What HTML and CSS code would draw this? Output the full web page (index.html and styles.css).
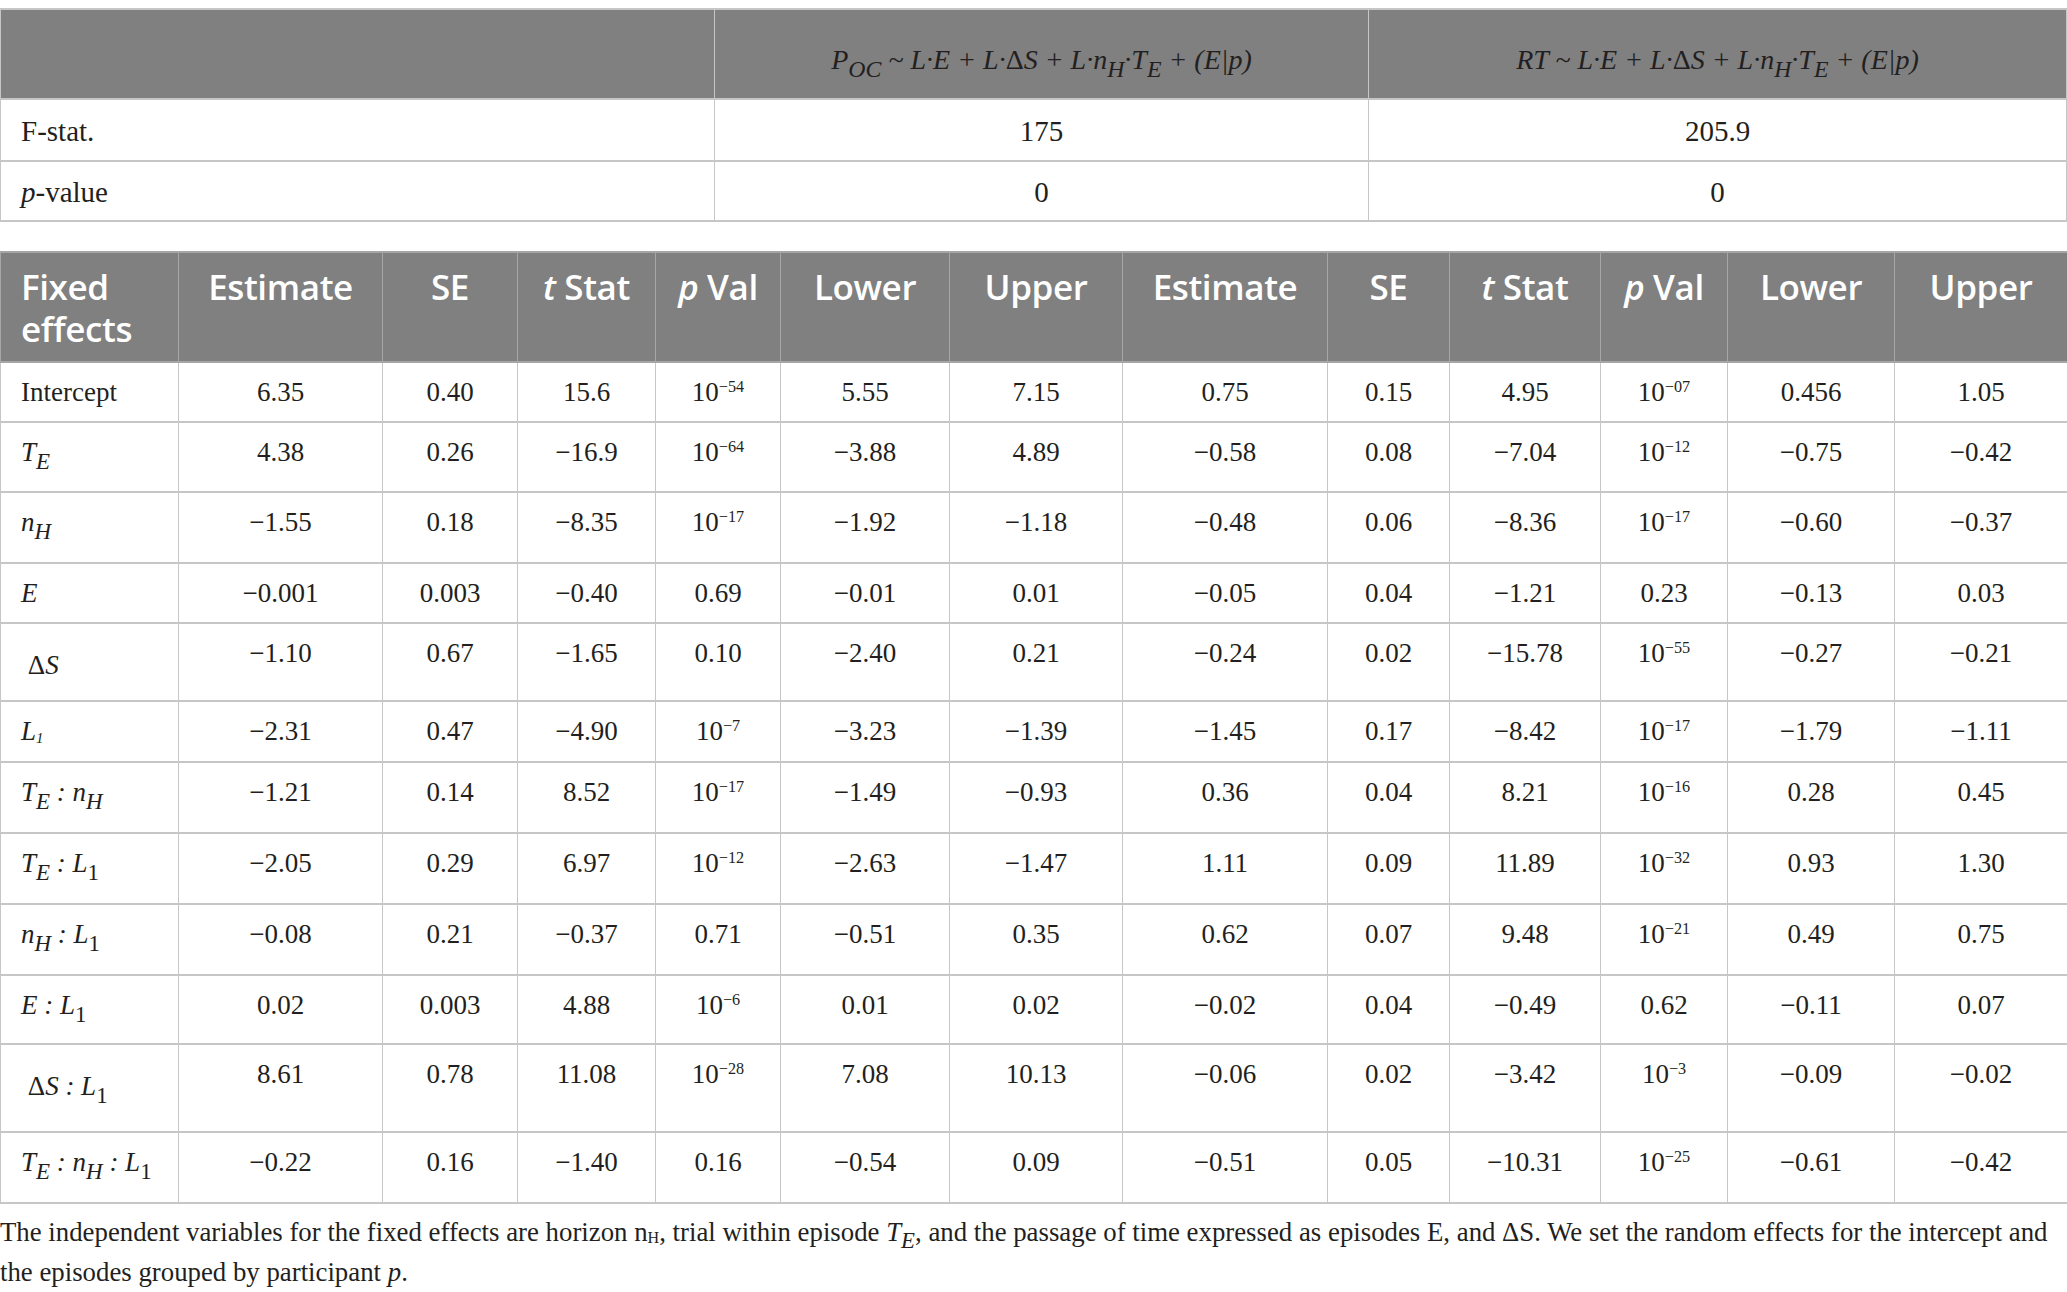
FILE: index.html
```html
<!DOCTYPE html>
<html lang="en">
<head>
  <meta charset="UTF-8" />
  <meta name="viewport" content="width=device-width, initial-scale=1.0" />
  <title>Mixed effects models</title>
  <link rel="stylesheet" href="styles.css">
</head>
<body>

  <!-- model summary -->
  <table class="models">
    <colgroup>
      <col class="c-name">
      <col class="c-model">
      <col class="c-model2">
    </colgroup>
    <thead>
      <tr>
        <th></th>
        <th><span class="math">P<sub>OC</sub> ~ L·E + L·<span class="up">Δ</span>S + L·n<sub>H</sub>·T<sub>E</sub> + (E|p)</span></th>
        <th><span class="math">RT ~ L·E + L·<span class="up">Δ</span>S + L·n<sub>H</sub>·T<sub>E</sub> + (E|p)</span></th>
      </tr>
    </thead>
    <tbody>
      <tr class="f-row">
        <td>F-stat.</td>
        <td>175</td>
        <td>205.9</td>
      </tr>
      <tr class="p-row">
        <td><i>p</i>-value</td>
        <td>0</td>
        <td>0</td>
      </tr>
    </tbody>
  </table>

  <!-- fixed effects -->
  <table class="effects">
    <colgroup>
      <col class="w178">
      <col class="w204">
      <col class="w135">
      <col class="w138">
      <col class="w125">
      <col class="w169">
      <col class="w173">
      <col class="w205">
      <col class="w122">
      <col class="w151">
      <col class="w127">
      <col class="w167">
      <col class="w173">
    </colgroup>
    <thead>
      <tr>
        <th>Fixed effects</th>
        <th>Estimate</th>
        <th>SE</th>
        <th><i>t</i> Stat</th>
        <th><i>p</i> Val</th>
        <th>Lower</th>
        <th>Upper</th>
        <th>Estimate</th>
        <th>SE</th>
        <th><i>t</i> Stat</th>
        <th><i>p</i> Val</th>
        <th>Lower</th>
        <th>Upper</th>
      </tr>
    </thead>
    <tbody>
      <tr class="r60">
        <td>Intercept</td>
        <td>6.35</td><td>0.40</td><td>15.6</td><td>10<sup>−54</sup></td><td>5.55</td><td>7.15</td>
        <td>0.75</td><td>0.15</td><td>4.95</td><td>10<sup>−07</sup></td><td>0.456</td><td>1.05</td>
      </tr>
      <tr class="r70">
        <td><span class="math">T<sub>E</sub></span></td>
        <td>4.38</td><td>0.26</td><td>−16.9</td><td>10<sup>−64</sup></td><td>−3.88</td><td>4.89</td>
        <td>−0.58</td><td>0.08</td><td>−7.04</td><td>10<sup>−12</sup></td><td>−0.75</td><td>−0.42</td>
      </tr>
      <tr class="r71">
        <td><span class="math">n<sub>H</sub></span></td>
        <td>−1.55</td><td>0.18</td><td>−8.35</td><td>10<sup>−17</sup></td><td>−1.92</td><td>−1.18</td>
        <td>−0.48</td><td>0.06</td><td>−8.36</td><td>10<sup>−17</sup></td><td>−0.60</td><td>−0.37</td>
      </tr>
      <tr class="r60">
        <td><span class="math">E</span></td>
        <td>−0.001</td><td>0.003</td><td>−0.40</td><td>0.69</td><td>−0.01</td><td>0.01</td>
        <td>−0.05</td><td>0.04</td><td>−1.21</td><td>0.23</td><td>−0.13</td><td>0.03</td>
      </tr>
      <tr class="r78">
        <td><span class="math low">&nbsp;<span class="up">Δ</span>S</span></td>
        <td>−1.10</td><td>0.67</td><td>−1.65</td><td>0.10</td><td>−2.40</td><td>0.21</td>
        <td>−0.24</td><td>0.02</td><td>−15.78</td><td>10<sup>−55</sup></td><td>−0.27</td><td>−0.21</td>
      </tr>
      <tr class="r61">
        <td><span class="math">L<sub class="small">1</sub></span></td>
        <td>−2.31</td><td>0.47</td><td>−4.90</td><td>10<sup>−7</sup></td><td>−3.23</td><td>−1.39</td>
        <td>−1.45</td><td>0.17</td><td>−8.42</td><td>10<sup>−17</sup></td><td>−1.79</td><td>−1.11</td>
      </tr>
      <tr class="r71">
        <td><span class="math">T<sub>E</sub> : n<sub>H</sub></span></td>
        <td>−1.21</td><td>0.14</td><td>8.52</td><td>10<sup>−17</sup></td><td>−1.49</td><td>−0.93</td>
        <td>0.36</td><td>0.04</td><td>8.21</td><td>10<sup>−16</sup></td><td>0.28</td><td>0.45</td>
      </tr>
      <tr class="r71">
        <td><span class="math">T<sub>E</sub> : L<sub class="up">1</sub></span></td>
        <td>−2.05</td><td>0.29</td><td>6.97</td><td>10<sup>−12</sup></td><td>−2.63</td><td>−1.47</td>
        <td>1.11</td><td>0.09</td><td>11.89</td><td>10<sup>−32</sup></td><td>0.93</td><td>1.30</td>
      </tr>
      <tr class="r71">
        <td><span class="math">n<sub>H</sub> : L<sub class="up">1</sub></span></td>
        <td>−0.08</td><td>0.21</td><td>−0.37</td><td>0.71</td><td>−0.51</td><td>0.35</td>
        <td>0.62</td><td>0.07</td><td>9.48</td><td>10<sup>−21</sup></td><td>0.49</td><td>0.75</td>
      </tr>
      <tr class="r69">
        <td><span class="math">E : L<sub class="up">1</sub></span></td>
        <td>0.02</td><td>0.003</td><td>4.88</td><td>10<sup>−6</sup></td><td>0.01</td><td>0.02</td>
        <td>−0.02</td><td>0.04</td><td>−0.49</td><td>0.62</td><td>−0.11</td><td>0.07</td>
      </tr>
      <tr class="r88">
        <td><span class="math low">&nbsp;<span class="up">Δ</span>S : L<sub class="up">1</sub></span></td>
        <td>8.61</td><td>0.78</td><td>11.08</td><td>10<sup>−28</sup></td><td>7.08</td><td>10.13</td>
        <td>−0.06</td><td>0.02</td><td>−3.42</td><td>10<sup>−3</sup></td><td>−0.09</td><td>−0.02</td>
      </tr>
      <tr class="r71">
        <td><span class="math">T<sub>E</sub> : n<sub>H</sub> : L<sub class="up">1</sub></span></td>
        <td>−0.22</td><td>0.16</td><td>−1.40</td><td>0.16</td><td>−0.54</td><td>0.09</td>
        <td>−0.51</td><td>0.05</td><td>−10.31</td><td>10<sup>−25</sup></td><td>−0.61</td><td>−0.42</td>
      </tr>
    </tbody>
  </table>

  <p class="note">The independent variables for the fixed effects are horizon n<sub class="tiny">H</sub>, trial within episode <span class="math">T<sub>E</sub></span>, and the passage of time expressed as episodes E, and ΔS. We set the random effects for the intercept and<br>the episodes grouped by participant <i>p</i>.</p>

</body>
</html>
```

FILE: styles.css
```css
body {
  margin: 0;
  font-family: "Liberation Serif", "Times New Roman", serif;
  color: #231f20;
  background: #fff;
}


table {
  width: 100%;
  border-collapse: collapse;
  table-layout: fixed;
}

td,
th {
  border: 1px solid #c6c6c6;
  border-top-width: 2px;
  border-bottom-width: 2px;
}

.math {
  font-style: italic;
}

.math sub {
  font-size: 0.85em;
  vertical-align: -0.35em;
  line-height: 0;
}

.math sub.small {
  font-size: 0.55em;
  vertical-align: -0.2em;
}

.up {
  font-style: normal;
}

sup {
  font-size: 0.6em;
  vertical-align: 0.55em;
  line-height: 0;
}


/* top table */
.models {
  margin-top: 8px;
  font-size: 29px;
}

.c-name { width: 714px; }
.c-model { width: 654px; }

.models th {
  height: 74px;
  padding-top: 13px;
  background-color: #808080;
  font-weight: normal;
  color: #231f20;
  font-size: 28px;
}

.models td {
  text-align: center;
  padding: 2px 20px 0;
}

.models td:first-child {
  text-align: left;
}

.f-row td { height: 58px; }
.p-row td { height: 56px; }


/* fixed effects table */
.effects {
  margin-top: 29px;
  font-size: 27px;
}

.w178 { width: 178px; }
.w204 { width: 204px; }
.w135 { width: 135px; }
.w138 { width: 138px; }
.w125 { width: 125px; }
.w169 { width: 169px; }
.w173 { width: 173px; }
.w205 { width: 205px; }
.w122 { width: 122px; }
.w151 { width: 151px; }
.w127 { width: 127px; }
.w167 { width: 167px; }

.effects th {
  height: 95px;
  background-color: #808080;
  color: #fff;
  font-family: "Open Sans", "Noto Sans", sans-serif;
  font-weight: 600;
  font-size: 35px;
  line-height: 42px;
  letter-spacing: -0.4px;
  vertical-align: top;
  padding: 13px 4px 0;
  border-color: #a6a6a6;
}

.effects th:first-child {
  text-align: left;
  padding-left: 20px;
}

.effects td {
  vertical-align: top;
  text-align: center;
  line-height: 36px;
  padding: 11px 4px 0;
}

.effects td:first-child {
  text-align: left;
  padding-left: 20px;
}

.effects td .low {
  display: inline-block;
  margin-top: 12px;
}

.r60 td { height: 47px; }
.r61 td { height: 48px; }
.r69 td { height: 56px; }
.r70 td { height: 57px; }
.r71 td { height: 58px; }
.r78 td { height: 65px; }
.r88 td { height: 75px; }


/* footnote */
.note {
  margin: 10px 0 0;
  font-size: 26.8px;
  line-height: 37px;
  white-space: nowrap;
}

.note .math sub,
.note sub.tiny {
  vertical-align: baseline;
  position: relative;
  top: 0.3em;
}

.note sub.tiny {
  font-size: 0.6em;
  top: 0.1em;
}
```
